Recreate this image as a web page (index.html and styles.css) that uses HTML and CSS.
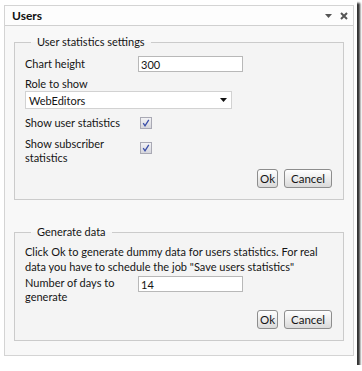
FILE: index.html
```html
<!DOCTYPE html>
<html lang="en">
<head>
    <meta charset="UTF-8">
    <title>Users</title>
    <link rel="stylesheet" href="styles.css">
</head>
<body>
    <div class="frame">
        <div class="panel">
            <div class="panel-header">
                <span class="panel-title">Users</span>
                <span class="panel-tools">
                    <svg class="tool-menu" width="7" height="4" viewBox="0 0 7 4"><path d="M0 0 L7 0 L3.5 4 Z" fill="#555"/></svg>
                    <svg class="tool-close" width="8" height="8" viewBox="0 0 8 8"><path d="M1 1 L7 7 M7 1 L1 7" stroke="#555" stroke-width="2"/></svg>
                </span>
            </div>

            <div class="panel-body">
                <!-- Settings -->
                <fieldset class="group group-settings">
                    <legend>User statistics settings</legend>

                    <div class="row row-chart">
                        <label for="chartHeight">Chart height</label>
                        <input type="text" id="chartHeight" class="text-input" value="300">
                    </div>

                    <label class="block-label" for="role">Role to show</label>
                    <div class="select-box" id="role">
                        <span>WebEditors</span>
                        <svg width="7" height="4" viewBox="0 0 7 4"><path d="M0 0 L7 0 L3.5 4 Z" fill="#111"/></svg>
                    </div>

                    <div class="row row-check">
                        <label>Show user statistics</label>
                        <span class="check"><svg width="8" height="8" viewBox="0 0 8 8"><path d="M1.2 4.2 L3 6.8 L6.8 0.8" fill="none" stroke="#3a4ea8" stroke-width="1.3"/></svg></span>
                    </div>

                    <div class="row row-check row-check2">
                        <label>Show subscriber statistics</label>
                        <span class="check"><svg width="8" height="8" viewBox="0 0 8 8"><path d="M1.2 4.2 L3 6.8 L6.8 0.8" fill="none" stroke="#3a4ea8" stroke-width="1.3"/></svg></span>
                    </div>

                    <div class="buttons">
                        <button class="btn btn-ok">Ok</button>
                        <button class="btn">Cancel</button>
                    </div>
                </fieldset>

                <!-- Dummy data -->
                <fieldset class="group group-generate">
                    <legend>Generate data</legend>

                    <p class="info">Click Ok to generate dummy data for users statistics. For real<br>data you have to schedule the job "Save users statistics"</p>

                    <div class="row row-days">
                        <label for="days">Number of days to generate</label>
                        <input type="text" id="days" class="text-input" value="14">
                    </div>

                    <div class="buttons">
                        <button class="btn btn-ok">Ok</button>
                        <button class="btn">Cancel</button>
                    </div>
                </fieldset>
            </div>
        </div>
    </div>
</body>
</html>
```

FILE: styles.css
```css
body {
    margin: 0;
    padding: 0;
    background-color: #fff;
    font-family: Lato, "Open Sans", sans-serif;
    font-size: 11px;
    color: #141414;
}

.frame {
    width: 357px;
    height: 365px;
    background-color: #fff;
    box-shadow: 3px 3px 2px #333;
    padding: 5px 0 0 4px;
    box-sizing: border-box;
}

.panel {
    width: 350px;
    box-sizing: border-box;
    border: 1px solid #d4d4d4;
    background-color: #f8f8f8;
}

.panel-header {
    height: 19px;
    border-bottom: 1px solid #d0d0d0;
    background-color: #fdfdfd;
    display: flex;
    align-items: center;
    justify-content: space-between;
    padding: 0 5px 0 7px;
}

.panel-title {
    font-weight: bold;
    font-size: 12px;
    color: #111;
}

.panel-tools {
    display: flex;
    align-items: center;
    gap: 8px;
}

.panel-body {
    padding: 8px 9px 14px 9px;
}

.group {
    margin: 0;
    padding: 0 1px 11px 10px;
    border: 1px solid #cbcbcb;
    background-color: #f4f4f4;
}

.group legend {
    font-size: 11px;
    line-height: 16px;
    padding: 0 6px;
    margin-left: 6px;
}

.group-generate {
    margin-top: 24px;
}

.row {
    display: flex;
    align-items: center;
}

.row label {
    width: 113px;
    flex-shrink: 0;
    line-height: 14px;
}

.row-chart {
    margin-top: 6px;
}

.text-input {
    width: 105px;
    height: 16px;
    box-sizing: border-box;
    border: 1px solid #b8b8b8;
    background-color: #fff;
    font-family: inherit;
    font-size: 11px;
    padding: 0 2px;
    margin: 0;
    color: #141414;
}

.block-label {
    display: block;
    margin-top: 5px;
    line-height: 14px;
}

.select-box {
    width: 207px;
    height: 18px;
    box-sizing: border-box;
    border: 1px solid #d2d2d2;
    background-color: #fff;
    display: flex;
    align-items: center;
    justify-content: space-between;
    padding: 0 4px 0 3px;
}

.row-check {
    margin-top: 7px;
}

.row-check2 {
    align-items: flex-start;
}

.row-check2 .check {
    margin-top: 5px;
}

.check {
    width: 12px;
    height: 12px;
    box-sizing: border-box;
    margin-left: 2px;
    border: 1px solid #a9a9b4;
    background: linear-gradient(#f2f2f5, #d6d6dc);
    display: flex;
    align-items: center;
    justify-content: center;
}

.buttons {
    display: flex;
    justify-content: flex-end;
    gap: 6px;
    margin: 4px 10px 0 0;
}

.btn {
    height: 19px;
    padding: 0 6px;
    font-family: inherit;
    font-size: 11.5px;
    color: #141414;
    border: 1px solid #8d8d8d;
    border-radius: 3px;
    background: linear-gradient(#ffffff, #dadada);
    cursor: pointer;
    line-height: 16px;
}

.btn-ok {
    padding: 0 2px;
}

.info {
    margin: 4px 0 0 0;
    line-height: 15px;
    white-space: nowrap;
}

.row-days {
    margin-top: 2px;
    align-items: flex-start;
}

.group-generate .buttons {
    margin-top: 6px;
}
```
